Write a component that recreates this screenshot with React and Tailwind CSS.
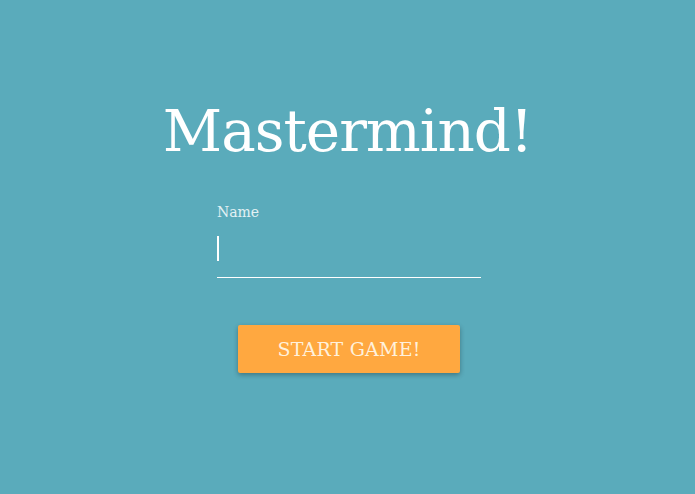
import React from "react";

export default function App() {
  return (
    <div
      className="w-full h-[494px] bg-[#5aabbb] flex flex-col items-center text-white"
      style={{ fontFamily: '"DejaVu Serif", "Liberation Serif", serif' }}
    >
      <h1 className="mt-[98px] text-[58px] leading-[66px] tracking-[-1px] font-normal">
        Mastermind!
      </h1>

      <div className="mt-[39px] w-[264px] ml-[3px] flex flex-col">
        <label className="text-[14px] leading-[18px] text-[#e2f1f4]">Name</label>
        <div className="mt-[13px] h-[44px] border-b-[1.5px] border-white flex items-start">
          <span className="w-[1.5px] h-[25px] bg-white mt-[2px]" />
        </div>
      </div>

      <button className="mt-[47px] ml-[3px] w-[222px] h-[48px] rounded-[2px] bg-[#ffa840] text-[#fff1dc] text-[19px] tracking-[0.2px] shadow-[0_2px_5px_rgba(0,0,0,0.3)]">
        START GAME!
      </button>
    </div>
  );
}
